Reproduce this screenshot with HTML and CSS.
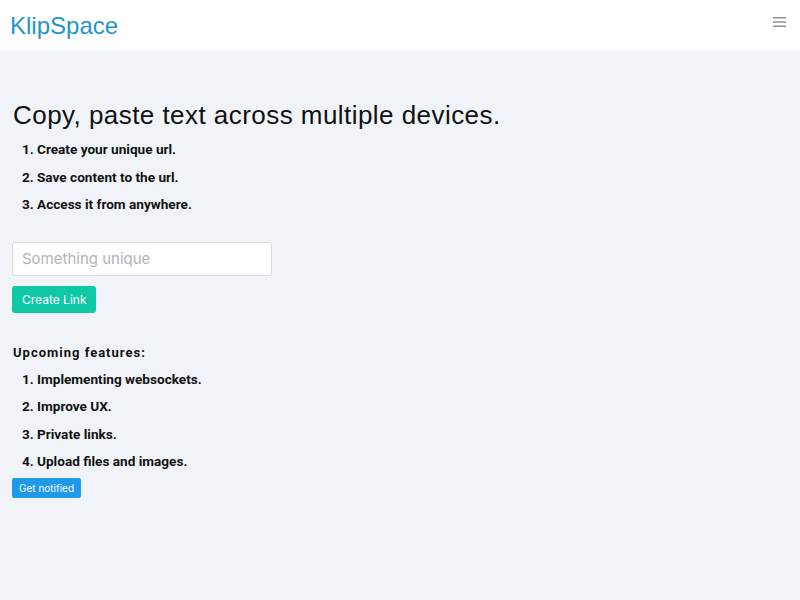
FILE: index.html
```html
<!DOCTYPE html>
<html lang="en">
<head>
  <meta charset="UTF-8">
  <meta name="viewport" content="width=device-width, initial-scale=1.0">
  <title>KlipSpace</title>
  <link rel="stylesheet" href="styles.css">
</head>
<body>
  <nav class="navbar">
    <a class="brand" href="#">KlipSpace</a>
    <button class="menu-toggle" type="button" aria-label="Menu">
      <svg width="13" height="10" viewBox="0 0 13 10">
        <path d="M0 0.75h13M0 5h13M0 9.25h13" stroke="#8a939e" stroke-width="1.5"/>
      </svg>
    </button>
  </nav>

  <main class="container">
    <h1>Copy, paste text across multiple devices.</h1>
    <ol class="steps">
      <li>Create your unique url.</li>
      <li>Save content to the url.</li>
      <li>Access it from anywhere.</li>
    </ol>

    <form class="create-form" onsubmit="return false;">
      <input type="text" class="url-input" placeholder="Something unique">
      <button type="submit" class="btn btn-create">Create Link</button>
    </form>

    <h2>Upcoming features:</h2>
    <ol class="steps">
      <li>Implementing websockets.</li>
      <li>Improve UX.</li>
      <li>Private links.</li>
      <li>Upload files and images.</li>
    </ol>
    <button type="button" class="btn btn-notify">Get notified</button>
  </main>
</body>
</html>
```

FILE: styles.css
```css
body {
  margin: 0;
  background: #f0f4f8;
  font-family: Roboto, 'Liberation Sans', sans-serif;
  color: #111;
}
.navbar {
  height: 50px;
  background: #fff;
  display: flex;
  justify-content: space-between;
  align-items: flex-start;
  padding: 0 14px 0 10px;
}
.brand {
  font-family: 'Liberation Sans', Arial, sans-serif;
  font-size: 24px;
  color: #1f96c6;
  text-decoration: none;
  margin-top: 12px;
}
.menu-toggle {
  background: none;
  border: none;
  padding: 0;
  margin-top: 15px;
  cursor: pointer;
}
.container {
  padding: 0 13px;
}
h1 {
  font-family: 'Liberation Sans', Arial, sans-serif;
  font-weight: normal;
  font-size: 26px;
  letter-spacing: 0.45px;
  margin: 50px 0 5px;
}
.steps {
  margin: 0;
  padding-left: 24px;
  font-weight: bold;
  font-size: 13.6px;
}
.steps li {
  line-height: 27.5px;
}
.create-form {
  margin: 23px 0 32px;
}
.url-input {
  display: block;
  width: 260px;
  height: 34px;
  box-sizing: border-box;
  margin-left: -1px;
  padding: 0 9px;
  border: 1px solid #d8dbe0;
  border-radius: 3px;
  font-family: 'Inter', 'Noto Sans', sans-serif;
  font-size: 15px;
  outline: none;
}
.url-input::placeholder {
  color: #b0b4b9;
}
.btn {
  border: none;
  color: #fff;
  font-family: Inter, 'Noto Sans', sans-serif;
  cursor: pointer;
}
.btn-create {
  margin: 10px 0 0 -1px;
  height: 27px;
  padding: 0 10px;
  background: #0ec8a6;
  border-radius: 3px;
  font-size: 12px;
}
h2 {
  font-size: 13px;
  letter-spacing: 1px;
  margin: 0 0 6px;
}
.btn-notify {
  margin: 2px 0 0 -1px;
  height: 20px;
  padding: 0 7px;
  background: #1e9ae8;
  border-radius: 2px;
  font-size: 10px;
}
```
